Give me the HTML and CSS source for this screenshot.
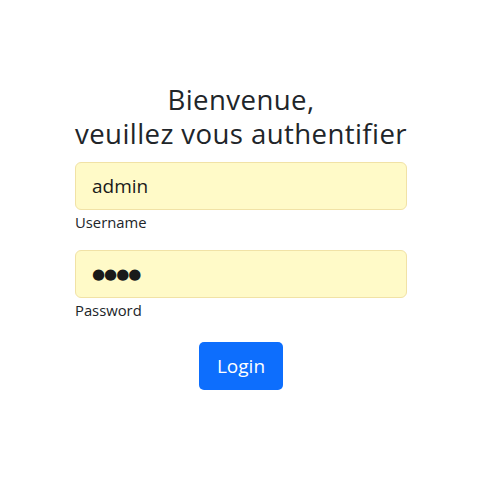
FILE: index.html
```html
<!DOCTYPE html>
<html lang="fr">
<head>
<meta charset="utf-8">
<title>Login</title>
<link rel="stylesheet" href="styles.css">
</head>
<body>
<main class="page">
  <form class="login">
    <h1 class="title">Bienvenue,<br>veuillez vous authentifier</h1>
    <div class="field">
      <div class="input">admin</div>
      <label class="label">Username</label>
    </div>
    <div class="field">
      <div class="input dots">●●●●</div>
      <label class="label">Password</label>
    </div>
    <div class="actions">
      <button type="button" class="btn">Login</button>
    </div>
  </form>
</main>
</body>
</html>
```
FILE: styles.css
```css
* { box-sizing: border-box; }
html, body { margin: 0; padding: 0; background: #fff; }
body {
  font-family: "Open Sans", "Noto Sans", sans-serif;
  color: #212529;
}
.page {
  display: flex;
  justify-content: center;
  padding: 82px 0 0 4px;
}
.login {
  width: 332px;
  display: flex;
  flex-direction: column;
}
.title {
  margin: 0 0 12px;
  font-weight: 400;
  font-size: 27.6px;
  line-height: 34px;
  text-align: center;
  letter-spacing: 0.4px;
}
.field {
  display: flex;
  flex-direction: column;
  margin-bottom: 16px;
}
.input {
  height: 48px;
  padding: 0 16px;
  display: flex;
  align-items: center;
  background: #fffac8;
  border: 1px solid #f1e2a6;
  border-radius: 6px;
  font-size: 19px;
  color: #1a1a1a;
}
.dots {
  font-size: 15px;
  letter-spacing: -1px;
  font-family: "DejaVu Sans", sans-serif;
}
.label {
  font-size: 14.8px;
  line-height: 24px;
}
.actions {
  display: flex;
  justify-content: center;
  margin-top: 4px;
}
.btn {
  height: 48px;
  width: 84px;
  border: 0;
  border-radius: 5px;
  background: #0d6efd;
  color: #fff;
  font-family: inherit;
  font-size: 19px;
  padding: 0;
}
```
